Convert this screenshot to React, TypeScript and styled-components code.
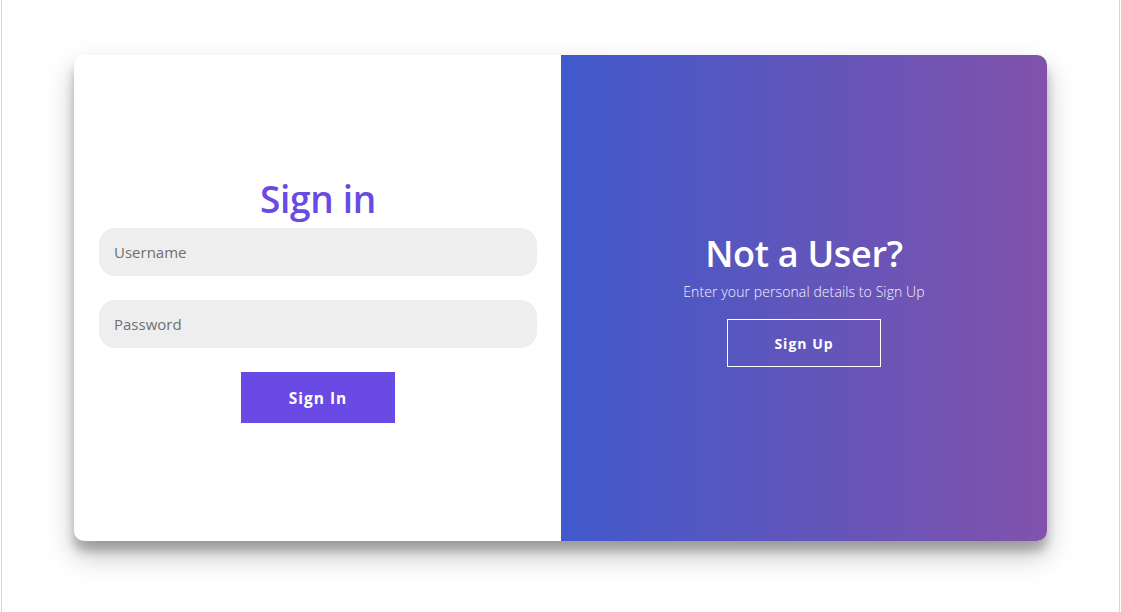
import styled, { createGlobalStyle } from "styled-components";

const GlobalStyle = createGlobalStyle`
  * {
    box-sizing: border-box;
  }
  body {
    margin: 0;
    background: #ffffff;
    font-family: "Open Sans", "Noto Sans", sans-serif;
  }
`;

const Page = styled.div`
  min-height: 100vh;
  margin: 0 1px;
  padding-top: 55px;
  border-left: 1px solid #d6d6e2;
  border-right: 1px solid #d6d6e2;
  display: flex;
  justify-content: center;
  align-items: flex-start;
`;

const Card = styled.div`
  width: 973px;
  height: 486px;
  display: grid;
  grid-template-columns: 487px 1fr;
  border-radius: 10px;
  overflow: hidden;
  background: #ffffff;
  box-shadow: 0 14px 28px rgba(0, 0, 0, 0.25), 0 10px 10px rgba(0, 0, 0, 0.22);
`;

const Form = styled.form`
  display: flex;
  flex-direction: column;
  align-items: center;
  justify-content: center;
  padding: 0 24px 0 25px;
`;

const Title = styled.h1<{ $light?: boolean }>`
  margin: 0 0 ${props => props.$light ? "0" : "4px"};
  font-size: ${props => props.$light ? "36px" : "37px"};
  font-weight: 600;
  letter-spacing: -0.3px;
  color: ${props => props.$light ? "#ffffff" : "#6a4ae4"};
`;

const Input = styled.input`
  all: unset;
  box-sizing: border-box;
  width: 100%;
  height: 48px;
  margin-bottom: 24px;
  padding: 0 15px;
  border-radius: 16px;
  background: #eeeeee;
  font-family: "Open Sans", "Noto Sans", sans-serif;
  font-size: 15px;
  color: #333;
  &::placeholder {
    color: #6f6f6f;
  }
`;

const Button = styled.button<{ $ghost?: boolean }>`
  width: ${props => props.$ghost ? "154px" : "154px"};
  height: ${props => props.$ghost ? "48px" : "51px"};
  border: ${props => props.$ghost ? "1px solid #ffffff" : "none"};
  background: ${props => props.$ghost ? "transparent" : "#6a4ae4"};
  color: #ffffff;
  font-family: "Open Sans", "Noto Sans", sans-serif;
  font-size: ${props => props.$ghost ? "14px" : "15.5px"};
  font-weight: 700;
  letter-spacing: 1px;
  cursor: pointer;
`;

const Overlay = styled.div`
  display: flex;
  flex-direction: column;
  align-items: center;
  justify-content: center;
  color: #ffffff;
  background: linear-gradient(to right, #4059cb, #8152ab);
`;

const Text = styled.p`
  margin: 4px 0 18px;
  font-size: 14px;
  font-weight: 300;
  letter-spacing: 0.1px;
  color: #f4f2ff;
`;

function App() {
  return (
    <>
      <GlobalStyle />
      <Page>
        <Card>
          <Form onSubmit={e => e.preventDefault()}>
            <Title>Sign in</Title>
            <Input placeholder="Username" />
            <Input type="password" placeholder="Password" />
            <Button type="submit">Sign In</Button>
          </Form>
          <Overlay>
            <Title $light>Not a User?</Title>
            <Text>Enter your personal details to Sign Up</Text>
            <Button $ghost>Sign Up</Button>
          </Overlay>
        </Card>
      </Page>
    </>
  );
}

export default App;
